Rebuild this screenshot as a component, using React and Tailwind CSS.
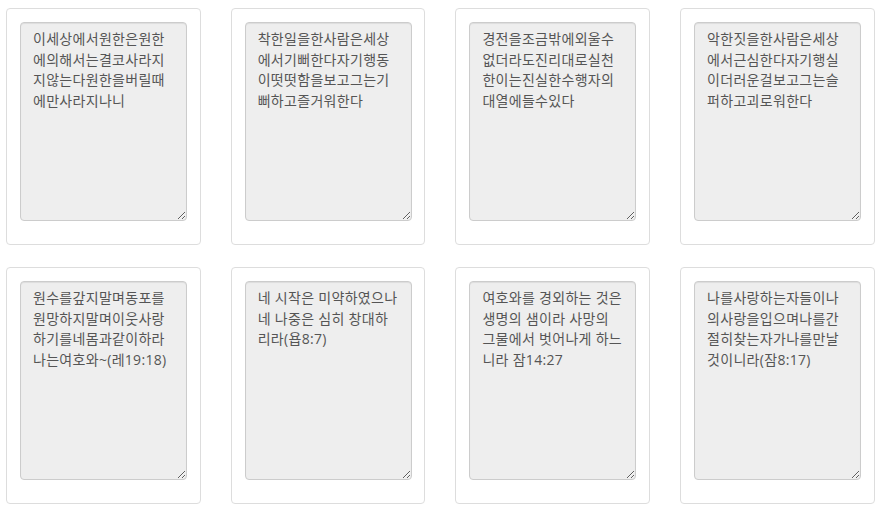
import React from "react";

const texts = [
  "이세상에서원한은원한에의해서는결코사라지지않는다원한을버릴때에만사라지나니",
  "착한일을한사람은세상에서기뻐한다자기행동이떳떳함을보고그는기뻐하고즐거워한다",
  "경전을조금밖에외울수없더라도진리대로실천한이는진실한수행자의대열에들수있다",
  "악한짓을한사람은세상에서근심한다자기행실이더러운걸보고그는슬퍼하고괴로워한다",
  "원수를갚지말며동포를원망하지말며이웃사랑하기를네몸과같이하라나는여호와~(레19:18)",
  "네 시작은 미약하였으나 네 나중은 심히 창대하리라(욥8:7)",
  "여호와를 경외하는 것은 생명의 샘이라 사망의 그물에서 벗어나게 하느니라 잠14:27",
  "나를사랑하는자들이나의사랑을입으며나를간절히찾는자가나를만날것이니라(잠8:17)",
];

export default function App() {
  return (
    <div className="w-[879px] h-[510px] bg-white pl-[6px] pt-[8px]">
      <div className="grid grid-cols-[repeat(4,194.5px)] gap-x-[30.2px] gap-y-[22px]">
        {texts.map((t, i) => (
          <div
            key={i}
            className="h-[237px] border border-[#dddddd] rounded-[4px] bg-white pl-[13px] pt-[13px]"
          >
            <textarea
              readOnly
              value={t}
              className="block w-[167px] h-[199px] bg-[#eeeeee] border border-[#cccccc] rounded-[4px] px-[12px] py-[6px] text-[14px] leading-[20.5px] tracking-[0.3px] text-[#555555] shadow-[inset_0_1px_1px_rgba(0,0,0,0.075)] outline-none resize"
              style={{ fontFamily: '"Open Sans", "Noto Sans CJK KR", sans-serif' }}
            />
          </div>
        ))}
      </div>
    </div>
  );
}
